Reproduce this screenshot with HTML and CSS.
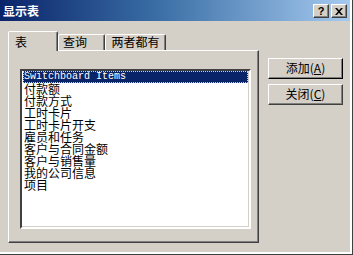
FILE: index.html
```html
<!DOCTYPE html>
<html lang="zh-CN">

<head>
    <meta charset="UTF-8">
    <title>显示表</title>
    <link rel="stylesheet" href="styles.css">
</head>

<body>
    <div class="dialog">
        <div class="titlebar">
            <span class="title">显示表</span>
            <div class="caption-buttons">
                <span class="cap-btn help">?</span>
                <span class="cap-btn close">
                    <svg width="8" height="7" viewBox="0 0 8 7">
                        <path d="M0 0h2l2 2.2L6 0h2L5 3.5 8 7H6L4 4.8 2 7H0l3-3.5z" fill="#000"/>
                    </svg>
                </span>
            </div>
        </div>

        <div class="content">
            <div class="tabs-area">
                <div class="tabstrip">
                    <div class="tab active">表</div>
                    <div class="tab tab-query">查询</div>
                    <div class="tab tab-both">两者都有</div>
                </div>
                <div class="tab-panel">
                    <div class="listbox">
                        <div class="item selected latin">Switchboard Items</div>
                        <div class="item">付款额</div>
                        <div class="item">付款方式</div>
                        <div class="item">工时卡片</div>
                        <div class="item">工时卡片开支</div>
                        <div class="item">雇员和任务</div>
                        <div class="item">客户与合同金额</div>
                        <div class="item">客户与销售量</div>
                        <div class="item">我的公司信息</div>
                        <div class="item">项目</div>
                    </div>
                </div>
            </div>

            <div class="side-buttons">
                <div class="btn default">添加(<u>A</u>)</div>
                <div class="btn">关闭(<u>C</u>)</div>
            </div>
        </div>
    </div>
</body>

</html>
```

FILE: styles.css
```css
body {
    margin: 0;
    background-color: #d4d0c8;
    font-family: "Noto Sans CJK SC", "Liberation Sans", sans-serif;
    font-size: 12px;
    color: #000000;
}

.dialog {
    width: 353px;
    height: 255px;
    box-sizing: border-box;
    padding-right: 3px;
    background-color: #d4d0c8;
    box-shadow: inset -1px -1px 0 #404040, inset -3px -3px 0 #ffffff;
    overflow: hidden;
}

/* 标题栏 */
.titlebar {
    height: 21px;
    display: flex;
    align-items: center;
    justify-content: space-between;
    padding: 0 3px 0 3px;
    background: linear-gradient(to right, #0a246a 0%, #3a6ea5 45%, #a6caf0 100%);
}

.title {
    color: #ffffff;
    font-weight: bold;
    font-size: 12px;
    line-height: 12px;
    margin-top: 1px;
}

.caption-buttons {
    display: flex;
    gap: 2px;
    margin-top: 1px;
}

.cap-btn {
    width: 16px;
    height: 14px;
    box-sizing: border-box;
    background-color: #d4d0c8;
    border: 1px solid;
    border-color: #ffffff #404040 #404040 #ffffff;
    box-shadow: inset -1px -1px 0 #808080;
    display: flex;
    align-items: center;
    justify-content: center;
}

.help {
    font-family: "Liberation Sans", sans-serif;
    font-weight: bold;
    font-size: 11px;
    line-height: 11px;
}

/* 主体 */
.content {
    display: flex;
    padding: 10px 0 0 8px;
}

.tabs-area {
    width: 251px;
}

.tabstrip {
    display: flex;
    align-items: flex-end;
    height: 19px;
    position: relative;
    z-index: 1;
}

.tab {
    box-sizing: border-box;
    height: 16px;
    padding: 1px 0 0 0;
    line-height: 12px;
    border: 1px solid;
    border-bottom: none;
    border-color: #ffffff #404040 transparent #ffffff;
    border-radius: 2px 2px 0 0;
    box-shadow: inset -1px 0 0 #808080;
    background-color: #d4d0c8;
    text-align: center;
}

.tab.active {
    width: 50px;
    height: 20px;
    margin-bottom: -1px;
    padding: 4px 0 0 6px;
    text-align: left;
}

.tab-query {
    width: 47px;
    padding-left: 4px;
    text-align: left;
}

.tab-both {
    width: 61px;
}

.tab-panel {
    box-sizing: border-box;
    height: 193px;
    padding: 18px 6px 0 11px;
    border: 1px solid;
    border-color: #ffffff #404040 #404040 #ffffff;
    box-shadow: inset -1px -1px 0 #808080;
}

/* 列表框 */
.listbox {
    box-sizing: border-box;
    width: 231px;
    height: 160px;
    border: 2px solid;
    border-color: #404040 #ffffff #ffffff #404040;
    box-shadow: 0 0 0 0 transparent, inset -1px -1px 0 #d4d0c8;
    outline: 1px solid transparent;
    background-color: #ffffff;
    padding: 0 1px;
}

.item {
    height: 12px;
    line-height: 12px;
    padding-left: 1px;
    white-space: nowrap;
}

.latin {
    font-family: "Liberation Mono", monospace;
    font-size: 10px;
}

.item.selected {
    background-color: #0a246a;
    color: #ffffff;
    outline: 1px dotted #d4d0c8;
    outline-offset: -1px;
}

/* 按钮 */
.side-buttons {
    display: flex;
    flex-direction: column;
    gap: 5px;
    margin: 27px 0 0 9px;
}

.btn {
    box-sizing: border-box;
    width: 75px;
    height: 21px;
    line-height: 17px;
    text-align: center;
    border: 1px solid;
    border-color: #ffffff #404040 #404040 #ffffff;
    box-shadow: inset -1px -1px 0 #808080;
    background-color: #d4d0c8;
}

.btn.default {
    border-color: #ffffff #000000 #000000 #ffffff;
}
```
